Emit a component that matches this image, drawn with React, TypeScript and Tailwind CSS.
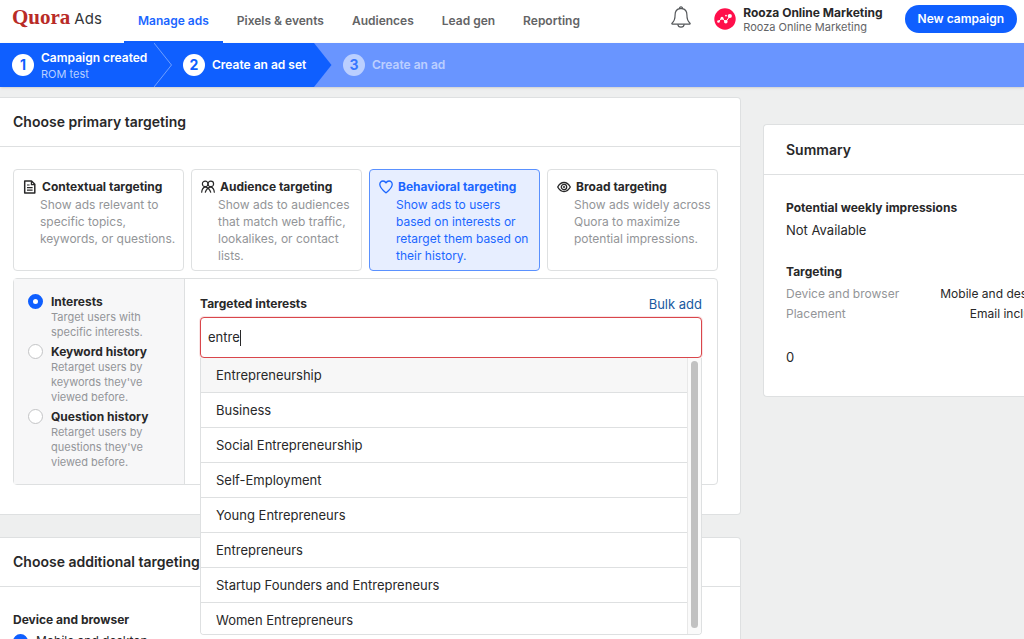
import React, { useState } from 'react';

const navItems = ['Manage ads', 'Pixels & events', 'Audiences', 'Lead gen', 'Reporting'];

const suggestions = [
  'Entrepreneurship',
  'Business',
  'Social Entrepreneurship',
  'Self-Employment',
  'Young Entrepreneurs',
  'Entrepreneurs',
  'Startup Founders and Entrepreneurs',
  'Women Entrepreneurs',
];

const histories = [
  { id: 'interests', name: 'Interests', text: 'Target users with specific interests.' },
  { id: 'keyword', name: 'Keyword history', text: "Retarget users by keywords they've viewed before." },
  { id: 'question', name: 'Question history', text: "Retarget users by questions they've viewed before." },
];

const radioClass =
  'shrink-0 appearance-none size-[15px] rounded-full border border-[#c3c4c6] bg-white checked:border-5 checked:border-[#0f5fff]';

const DocIcon = () => (
  <svg width="14" height="14" viewBox="0 0 14 14" fill="none" stroke="currentColor" strokeWidth="1.5">
    <path d="M1.700 1h6.800l3.300 3.300V13H1.700z" strokeLinejoin="round" />
    <path d="M8.400 1v3.600H12M4 5h2.600M4 7.600h5.600M4 10.200h5.600" strokeWidth="1.2" />
  </svg>
);

const PeopleIcon = () => (
  <svg width="14" height="14" viewBox="0 0 14 14" fill="none" stroke="currentColor" strokeWidth="1.2" strokeLinecap="round">
    <circle cx="4.200" cy="3.900" r="2.800" />
    <circle cx="9.800" cy="3.900" r="2.800" />
    <path d="M.7 12.200C.9 9.600 2.300 7.500 4.200 6.900c2.700.8 4.700 2.800 5.500 5.300M13.300 12.200c-.2-2.600-1.600-4.700-3.500-5.300-2.700.8-4.700 2.800-5.500 5.300" />
  </svg>
);

const HeartIcon = () => (
  <svg width="14" height="14" viewBox="0 0 14 14" fill="none" stroke="currentColor" strokeWidth="1.3" strokeLinejoin="round">
    <path d="M7 2.900C6.300 1.500 5.200 1 4 1 2.200 1 .8 2.400.8 4.400c0 3.300 3.200 5.900 6.200 8.400 3-2.500 6.200-5.100 6.200-8.400C13.200 2.400 11.800 1 10 1 8.800 1 7.700 1.500 7 2.900z" />
  </svg>
);

const EyeIcon = () => (
  <svg width="14" height="14" viewBox="0 0 14 14" fill="none" stroke="currentColor" strokeWidth="1.3" strokeLinejoin="round">
    <path d="M.7 7C2.300 4 4.500 2.500 7 2.500S11.700 4 13.300 7c-1.600 3-3.800 4.500-6.300 4.500S2.300 10 .7 7z" />
    <circle cx="7" cy="7" r="2.700" />
    <circle cx="7" cy="7" r=".7" strokeWidth="1" />
  </svg>
);

const BellIcon = () => (
  <svg width="20" height="23" viewBox="0 0 20 23" fill="none" stroke="#55585b" strokeWidth="1.2" strokeLinejoin="round">
    <path d="M8.500 2.600C8.400 1.500 9 .8 10 .8s1.600.7 1.500 1.800c2.900.7 4.400 3 4.400 6.200 0 5.200 1 6.800 3.100 8.400.4.500.2 1-.4 1H1.400c-.6 0-.8-.5-.4-1 2.100-1.600 3.100-3.200 3.100-8.400 0-3.200 1.500-5.500 4.400-6.200z" />
    <path d="M6.800 18.200c.2 2 1.500 3 3.200 3s3-1 3.200-3M8.200 2.700h3.600" />
  </svg>
);

const AvatarIcon = () => (
  <svg width="22" height="22" viewBox="0 0 22 22">
    <circle cx="11" cy="11" r="10.700" fill="#ff0f4b" />
    <path d="M4.500 13.500l3.500-3.300 3.800 3.600 4.200-5.800" fill="none" stroke="#fff" strokeWidth="1" />
    <circle cx="4.500" cy="13.500" r="1.300" fill="#fff" />
    <circle cx="8" cy="10.200" r="1.500" fill="#fff" />
    <circle cx="11.800" cy="13.800" r="1.800" fill="#fff" />
    <circle cx="15.800" cy="8" r="2.100" fill="#fff" />
    <circle cx="12" cy="7.600" r=".9" fill="#fff" />
  </svg>
);

const targetings = [
  { name: 'Contextual targeting', text: 'Show ads relevant to specific topics, keywords, or questions.', icon: DocIcon },
  { name: 'Audience targeting', text: 'Show ads to audiences that match web traffic, lookalikes, or contact lists.', icon: PeopleIcon },
  { name: 'Behavioral targeting', text: 'Show ads to users based on interests or retarget them based on their history.', icon: HeartIcon },
  { name: 'Broad targeting', text: 'Show ads widely across Quora to maximize potential impressions.', icon: EyeIcon },
];

const Header = () => (
  <header className="flex h-[43px] items-stretch whitespace-nowrap bg-white">
    <a href="#" className="flex w-[124px] shrink-0 items-baseline gap-1 pl-3 pt-[2px]">
      <span className="font-['Liberation_Serif',serif] text-[21px] font-bold text-[#b92b27]">Quora</span>
      <span className="text-[15px] text-[#333639]">Ads</span>
    </a>
    <nav className="flex">
      {navItems.map((item, i) => (
        <a
          key={item}
          href="#"
          className={`flex items-center border-b-2 px-[14px] text-xs font-semibold ${
            i === 0 ? 'border-[#0f5fff] text-[#1b66ff]' : 'border-transparent text-[#636466]'
          }`}
        >
          {item}
        </a>
      ))}
    </nav>
    <div className="ml-auto flex items-center pb-[5px] pr-[7px]">
      <button aria-label="Notifications" className="mr-[23px] pb-1">
        <BellIcon />
      </button>
      <AvatarIcon />
      <div className="ml-[7px] mr-[22px] text-[#282829]">
        <p className="text-xs font-bold leading-[15px]">Rooza Online Marketing</p>
        <p className="text-[11px] leading-[14px] text-[#636466]">Rooza Online Marketing</p>
      </div>
      <button className="h-7 rounded-full bg-[#0f5fff] px-[13px] text-xs font-semibold text-white">New campaign</button>
    </div>
  </header>
);

const StepNumber = ({ children }: { children: React.ReactNode }) => (
  <span className="flex size-[22px] shrink-0 items-center justify-center rounded-full bg-white text-sm font-bold text-[#0f5fff]">
    {children}
  </span>
);

const Steps = () => (
  <ol className="relative z-10 flex h-11 items-stretch whitespace-nowrap bg-[#6995ff] text-xs font-semibold text-white shadow-sm">
    <li className="flex w-[154px] items-center gap-[7px] bg-[#0f5fff] pl-3">
      <StepNumber>1</StepNumber>
      <div className="pt-px">
        <p className="leading-4">Campaign created</p>
        <p className="text-[11px] font-normal leading-4 text-[#b7cfff]">ROM test</p>
      </div>
    </li>
    <li className="flex items-center bg-[#0f5fff]">
      <svg width="18" height="44" viewBox="0 0 18 44" fill="none" stroke="#6f9fff">
        <path d="M0 0l17.500 22L0 44" />
      </svg>
      <div className="flex w-[142px] items-center gap-[7px] pl-[11px]">
        <StepNumber>2</StepNumber>
        <span>Create an ad set</span>
      </div>
    </li>
    <li className="flex items-center">
      <svg width="18" height="44" viewBox="0 0 18 44">
        <path d="M0 0l17.500 22L0 44z" fill="#0f5fff" />
      </svg>
      <div className="flex items-center gap-[7px] pl-[11px] opacity-55">
        <StepNumber>3</StepNumber>
        <span>Create an ad</span>
      </div>
    </li>
  </ol>
);

const InterestsField = () => {
  const [query, setQuery] = useState('entre');

  return (
    <div className="flex-1 px-[15px] pt-4">
      <div className="mb-1 flex items-center justify-between leading-[18px]">
        <label htmlFor="interests-search" className="text-xs font-bold">
          Targeted interests
        </label>
        <a href="#" className="text-[13px] text-[#195aa0]">
          Bulk add
        </a>
      </div>
      <div className="relative">
        <div className="flex h-[41px] items-center rounded-sm border border-[#d9464b] bg-white px-[7px] ring-1 ring-[#d9464b]/15">
          <input
            id="interests-search"
            value={query}
            onChange={e => setQuery(e.target.value)}
            className="field-sizing-content text-[13px] outline-none"
          />
          <span className="h-4 w-px bg-[#282829]" />
        </div>
        <div className="absolute inset-x-0 top-full z-20 flex h-[277px] overflow-hidden rounded-b-sm border border-t-0 border-[#dee0e1] bg-white">
          <ul className="flex-1">
            {suggestions.map((s, i) => (
              <li key={s} className={`border-b border-[#dee0e1] ${i === 0 ? 'bg-[#f7f7f7]' : 'bg-white'}`}>
                <button className="block h-[34px] w-full pl-[15px] pt-[2px] text-left text-[13px]">{s}</button>
              </li>
            ))}
          </ul>
          <div className="w-[14px] border-l border-[#e8e8e8] bg-[#fafafa] px-[3px] pb-[6px] pt-[3px]">
            <div className="h-full rounded-full bg-[#c1c1c1]" />
          </div>
        </div>
      </div>
    </div>
  );
};

const PrimaryTargeting = () => (
  <section className="rounded-r-sm border border-l-0 border-[#dee0e1] bg-white pb-[29px]">
    <h2 className="border-b border-[#dee0e1] px-[13px] py-[14px] text-sm font-semibold leading-5">
      Choose primary targeting
    </h2>
    <div className="pl-[13px] pr-[22px] pt-[22px]">
      <div className="grid grid-cols-4 gap-[7px]">
        {targetings.map(({ name, text, icon: Icon }, i) => (
          <button
            key={name}
            className={`flex h-[102px] flex-col rounded-sm border px-[9px] pt-2 text-left text-xs ${
              i === 2 ? 'border-[#5a91ff] bg-[#e7eeff] text-[#1b66ff]' : 'border-[#dee0e1] bg-white'
            }`}
          >
            <span className="flex items-center gap-[5px] whitespace-nowrap font-bold leading-[18px]">
              <Icon />
              {name}
            </span>
            <span className={`-mr-2 pl-[17px] leading-[17px] ${i === 2 ? '' : 'text-[#939598]'}`}>{text}</span>
          </button>
        ))}
      </div>
      <div className="mt-[7px] flex h-[207px] rounded-sm border border-[#dee0e1]">
        <fieldset className="w-[171px] shrink-0 border-r border-[#dee0e1] bg-[#f7f7f8] pl-[14px] pr-[30px] pt-[15px]">
          {histories.map((h, i) => (
            <label key={h.id} className="mb-1 flex gap-2">
              <input type="radio" name="history" defaultChecked={i === 0} className={radioClass} />
              <span>
                <span className="block whitespace-nowrap text-xs font-bold leading-4">{h.name}</span>
                <span className="block text-[11px] leading-[15px] text-[#939598]">{h.text}</span>
              </span>
            </label>
          ))}
        </fieldset>
        <InterestsField />
      </div>
    </div>
  </section>
);

const AdditionalTargeting = () => (
  <section className="rounded-r-sm border border-l-0 border-[#dee0e1] bg-white">
    <h2 className="border-b border-[#dee0e1] px-[13px] py-[14px] text-sm font-semibold leading-5">
      Choose additional targeting
    </h2>
    <div className="px-[13px] pb-[22px] pt-6">
      <fieldset>
        <legend className="text-xs font-bold leading-[18px]">Device and browser</legend>
        <label className="mt-1 flex items-center gap-2 text-xs">
          <input type="radio" name="device" defaultChecked className={radioClass} />
          Mobile and desktop
        </label>
      </fieldset>
    </div>
  </section>
);

const Summary = () => (
  <aside className="mt-[27px] overflow-hidden rounded-l-sm border border-r-0 border-[#dee0e1] bg-white">
    <h2 className="border-b border-[#dee0e1] px-[22px] py-[14px] text-sm font-semibold leading-[21px]">Summary</h2>
    <div className="w-[310px] px-[22px] pb-[30px] pt-6 text-[13px]">
      <h3 className="text-xs font-bold leading-[18px]">Potential weekly impressions</h3>
      <p className="mt-1 leading-[18px]">Not Available</p>
      <h3 className="mt-6 text-xs font-bold leading-[18px]">Targeting</h3>
      <dl className="mt-[3px] text-xs leading-5">
        <div className="flex justify-between">
          <dt className="text-[#939598]">Device and browser</dt>
          <dd>Mobile and desktop</dd>
        </div>
        <div className="flex justify-between">
          <dt className="text-[#939598]">Placement</dt>
          <dd>Email included</dd>
        </div>
      </dl>
      <p className="mt-6 leading-[18px]">0</p>
    </div>
  </aside>
);

export default function App() {
  return (
    <div className="min-h-screen overflow-hidden bg-[#eeefef] font-[Inter,sans-serif] text-[#282829]">
      <Header />
      <Steps />
      <main className="grid grid-cols-[minmax(0,1fr)_261px] items-start gap-[22px] pt-[10px]">
        <div className="flex flex-col gap-[22px]">
          <PrimaryTargeting />
          <AdditionalTargeting />
        </div>
        <Summary />
      </main>
    </div>
  );
}
